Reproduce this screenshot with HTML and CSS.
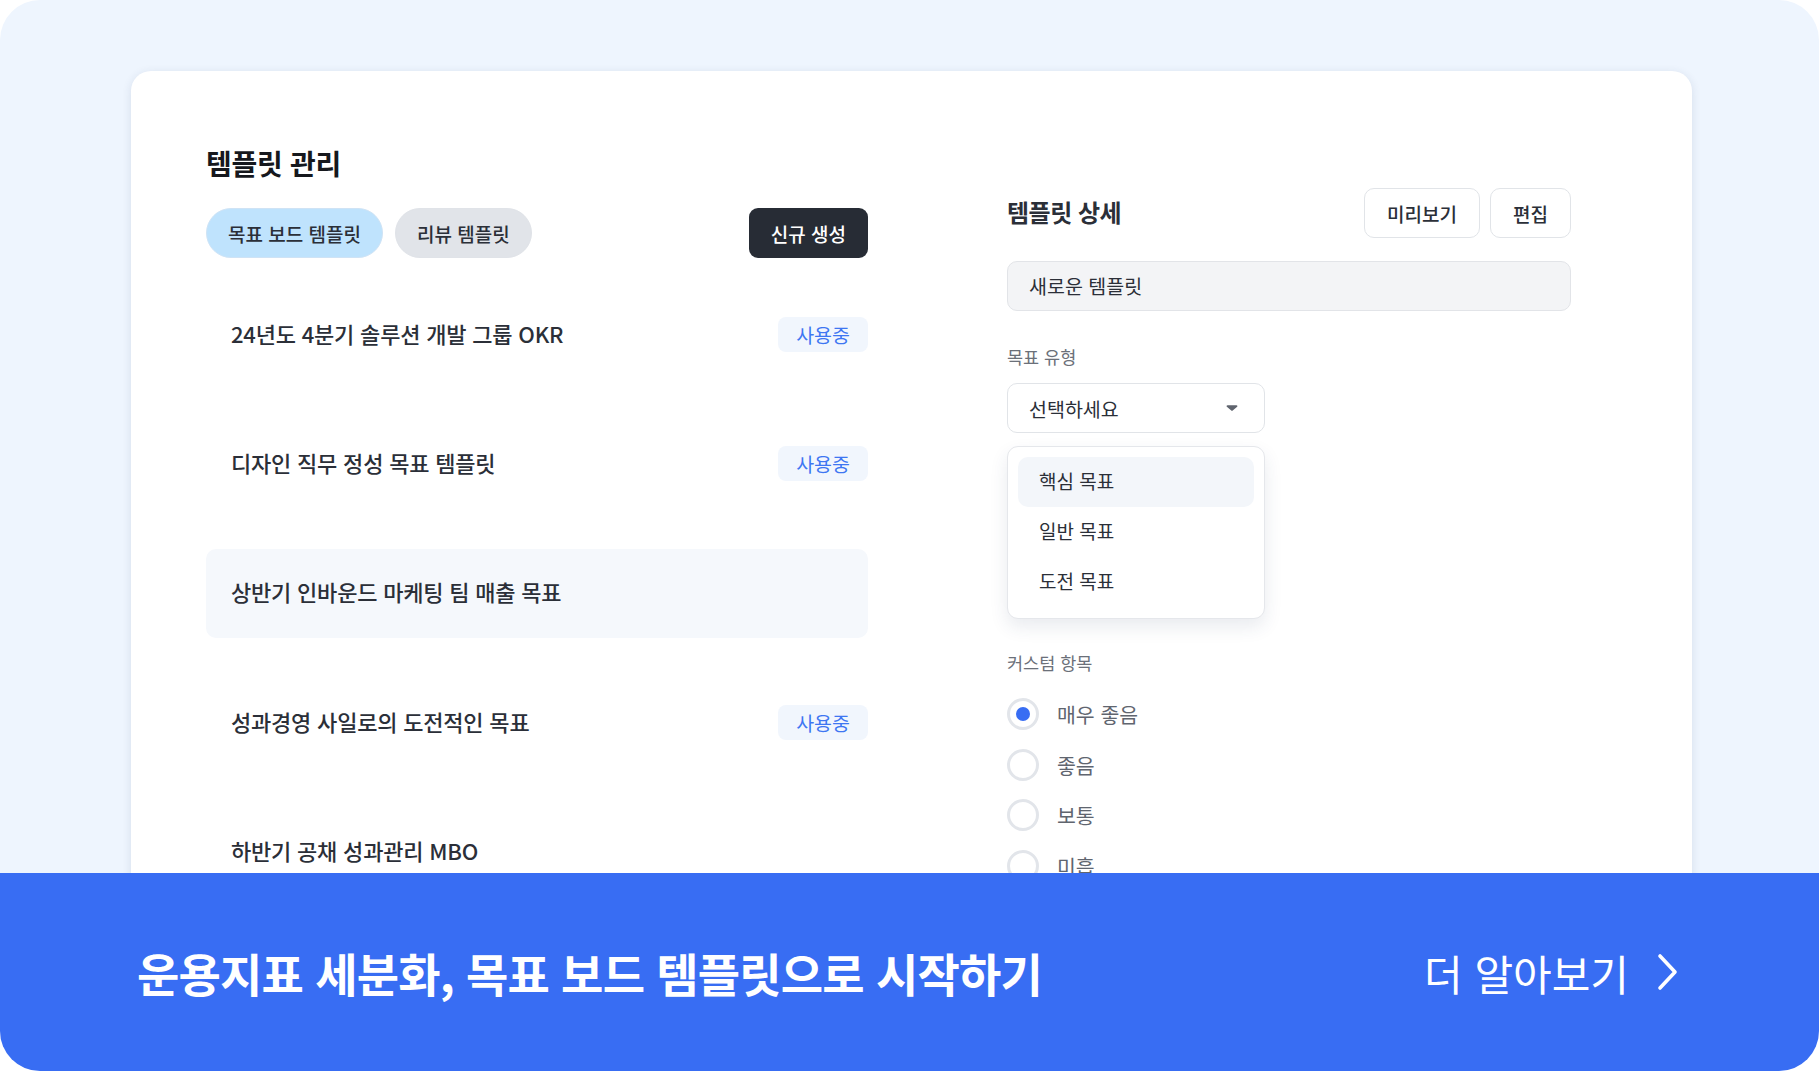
FILE: index.html
```html
<!DOCTYPE html>
<html lang="ko">

<head>
    <meta charset="utf-8">
    <title>템플릿 관리</title>
    <link rel="stylesheet" href="styles.css">
</head>

<body>
    <div class="frame">
        <div class="stage">
            <section class="card">
                <div class="col-left">
                    <h1 class="title">템플릿 관리</h1>
                    <div class="toolbar">
                        <div class="tabs">
                            <button class="tab tab-active">목표 보드 템플릿</button>
                            <button class="tab">리뷰 템플릿</button>
                        </div>
                        <button class="btn-dark">신규 생성</button>
                    </div>
                    <ul class="template-list">
                        <li class="template-row"><span>24년도 4분기 솔루션 개발 그룹 OKR</span><span class="badge">사용중</span></li>
                        <li class="template-row"><span>디자인 직무 정성 목표 템플릿</span><span class="badge">사용중</span></li>
                        <li class="template-row selected"><span>상반기 인바운드 마케팅 팀 매출 목표</span></li>
                        <li class="template-row"><span>성과경영 사일로의 도전적인 목표</span><span class="badge">사용중</span></li>
                        <li class="template-row"><span>하반기 공채 성과관리 MBO</span></li>
                    </ul>
                </div>

                <div class="col-right">
                    <div class="detail-head">
                        <h2 class="subtitle">템플릿 상세</h2>
                        <div class="actions">
                            <button class="btn-outline">미리보기</button>
                            <button class="btn-outline">편집</button>
                        </div>
                    </div>
                    <div class="text-input">새로운 템플릿</div>

                    <div class="field-label">목표 유형</div>
                    <div class="select">
                        <span>선택하세요</span>
                        <svg class="caret" width="12" height="8" viewBox="0 0 12 8">
                            <path d="M1.5 1.2h9c.8 0 1.2.9.7 1.5L6.7 6.6a1 1 0 0 1-1.4 0L.8 2.7C.3 2.1.7 1.2 1.5 1.2z" fill="#5f646e"/>
                        </svg>
                    </div>
                    <ul class="dropdown">
                        <li class="option hover">핵심 목표</li>
                        <li class="option">일반 목표</li>
                        <li class="option">도전 목표</li>
                    </ul>

                    <div class="field-label custom">커스텀 항목</div>
                    <ul class="radio-list">
                        <li class="radio-row"><span class="radio checked"></span>매우 좋음</li>
                        <li class="radio-row"><span class="radio"></span>좋음</li>
                        <li class="radio-row"><span class="radio"></span>보통</li>
                        <li class="radio-row"><span class="radio"></span>미흡</li>
                    </ul>
                </div>
            </section>
        </div>

        <div class="banner">
            <div class="banner-title">운용지표 세분화, 목표 보드 템플릿으로 시작하기</div>
            <a class="banner-link" href="#">더 알아보기
                <svg width="22" height="38" viewBox="0 0 22 38">
                    <path d="M3 3l15 16L3 35" fill="none" stroke="#fff" stroke-width="3.6" stroke-linecap="round" stroke-linejoin="round"/>
                </svg>
            </a>
        </div>
    </div>
</body>

</html>
```

FILE: styles.css
```css
body {
    margin: 0;
    background: #fff;
    font-family: 'Noto Sans CJK KR', 'Noto Sans', sans-serif;
    color: #2b2f38;
}

ul {
    list-style: none;
    margin: 0;
    padding: 0;
}

button {
    font-family: inherit;
    cursor: pointer;
}

.frame {
    width: 1819px;
    height: 1071px;
    border-radius: 40px;
    overflow: hidden;
    background: #eef5fe;
    display: flex;
    flex-direction: column;
}

.stage {
    height: 873px;
    overflow: hidden;
    padding: 71px 0 0 131px;
    box-sizing: border-box;
}

.card {
    width: 1561px;
    height: 900px;
    box-sizing: border-box;
    padding: 74px 0 0 75px;
    background: #fff;
    border-radius: 20px;
    box-shadow: 0 2px 10px rgba(40, 60, 100, 0.12);
    display: flex;
    gap: 139px;
}

/* left column: template list */

.col-left {
    width: 662px;
}

.title {
    margin: 0;
    font-size: 28px;
    line-height: 36px;
    font-weight: 700;
    letter-spacing: -0.3px;
    color: #16181d;
}

.toolbar {
    display: flex;
    justify-content: space-between;
    margin-top: 27px;
}

.tabs {
    display: flex;
    gap: 12px;
}

.tab {
    height: 50px;
    padding: 0 21px;
    border-radius: 25px;
    border: 1px solid #e0e3e8;
    background: #e1e4e9;
    font-size: 19px;
    font-weight: 500;
    color: #2b2f38;
}

.tab-active {
    background: #bfe3fd;
    border-color: #cfe3f5;
}

.btn-dark {
    height: 50px;
    padding: 0 22px;
    border: none;
    border-radius: 9px;
    background: #272c35;
    color: #fff;
    font-size: 19px;
    font-weight: 500;
}

.template-list {
    margin-top: 32px;
    display: flex;
    flex-direction: column;
    gap: 40.4px;
}

.template-row {
    height: 89px;
    box-sizing: border-box;
    display: flex;
    align-items: center;
    justify-content: space-between;
    padding: 0 0 4px 25px;
    border-radius: 10px;
    font-size: 22px;
    font-weight: 500;
    letter-spacing: -0.2px;
    color: #2b2f38;
}

.template-row.selected {
    background: #f5f8fc;
}

.badge {
    height: 35px;
    line-height: 35px;
    margin-top: 4px;
    padding: 0 18px;
    border-radius: 8px;
    background: #f1f6fd;
    color: #3e76f2;
    font-size: 19.5px;
    font-weight: 400;
    letter-spacing: 0;
}

/* right column: template detail form */

.col-right {
    width: 564px;
    padding-top: 43px;
}

.detail-head {
    height: 50px;
    display: flex;
    align-items: center;
    justify-content: space-between;
}

.subtitle {
    margin: 0 0 4px;
    font-size: 24px;
    font-weight: 700;
    letter-spacing: -0.5px;
    color: #2b2f38;
}

.actions {
    display: flex;
    gap: 10px;
}

.btn-outline {
    height: 50px;
    padding: 0 22px;
    border: 1px solid #e1e4e8;
    border-radius: 10px;
    background: #fff;
    font-size: 19px;
    font-weight: 500;
    color: #2b2f38;
}

.text-input {
    margin-top: 23px;
    height: 50px;
    box-sizing: border-box;
    padding: 0 0 2px 21px;
    display: flex;
    align-items: center;
    background: #f3f4f6;
    border: 1px solid #e2e4e8;
    border-radius: 10px;
    font-size: 19.5px;
}

.field-label {
    margin-top: 34px;
    font-size: 17.5px;
    line-height: 24px;
    color: #6b7079;
}

.field-label.custom {
    margin-top: 32px;
}

.select {
    margin-top: 14px;
    width: 258px;
    height: 50px;
    box-sizing: border-box;
    padding: 0 26px 0 21px;
    display: flex;
    align-items: center;
    justify-content: space-between;
    border: 1px solid #e1e4e8;
    border-radius: 10px;
    font-size: 19.5px;
}

.dropdown {
    margin-top: 13px;
    width: 258px;
    box-sizing: border-box;
    padding: 10px 10px 11px;
    border: 1px solid #e5e7eb;
    border-radius: 11px;
    background: #fff;
    box-shadow: 0 8px 18px rgba(40, 60, 100, 0.10);
}

.option {
    height: 50px;
    box-sizing: border-box;
    padding: 0 0 4px 21px;
    display: flex;
    align-items: center;
    border-radius: 10px;
    font-size: 19px;
}

.option.hover {
    background: #f3f6fa;
}

.radio-list {
    margin-top: 14px;
}

.radio-row {
    height: 50.5px;
    display: flex;
    align-items: center;
    gap: 18px;
    font-size: 20.5px;
    color: #60656f;
}

.radio {
    width: 32px;
    height: 32px;
    box-sizing: border-box;
    border: 3px solid #e2e5ea;
    border-radius: 50%;
    display: flex;
    align-items: center;
    justify-content: center;
}

.radio.checked::after {
    content: "";
    width: 14px;
    height: 14px;
    border-radius: 50%;
    background: #386df3;
}

/* bottom call-to-action strip */

.banner {
    flex: 1;
    background: #386df3;
    display: flex;
    align-items: center;
    justify-content: space-between;
    padding: 0 140px 0 137px;
}

.banner-title {
    font-size: 46px;
    font-weight: 700;
    letter-spacing: -0.8px;
    color: #fff;
}

.banner-link {
    display: flex;
    align-items: center;
    gap: 28px;
    color: #fff;
    text-decoration: none;
    font-size: 42px;
    font-weight: 400;
}
```
